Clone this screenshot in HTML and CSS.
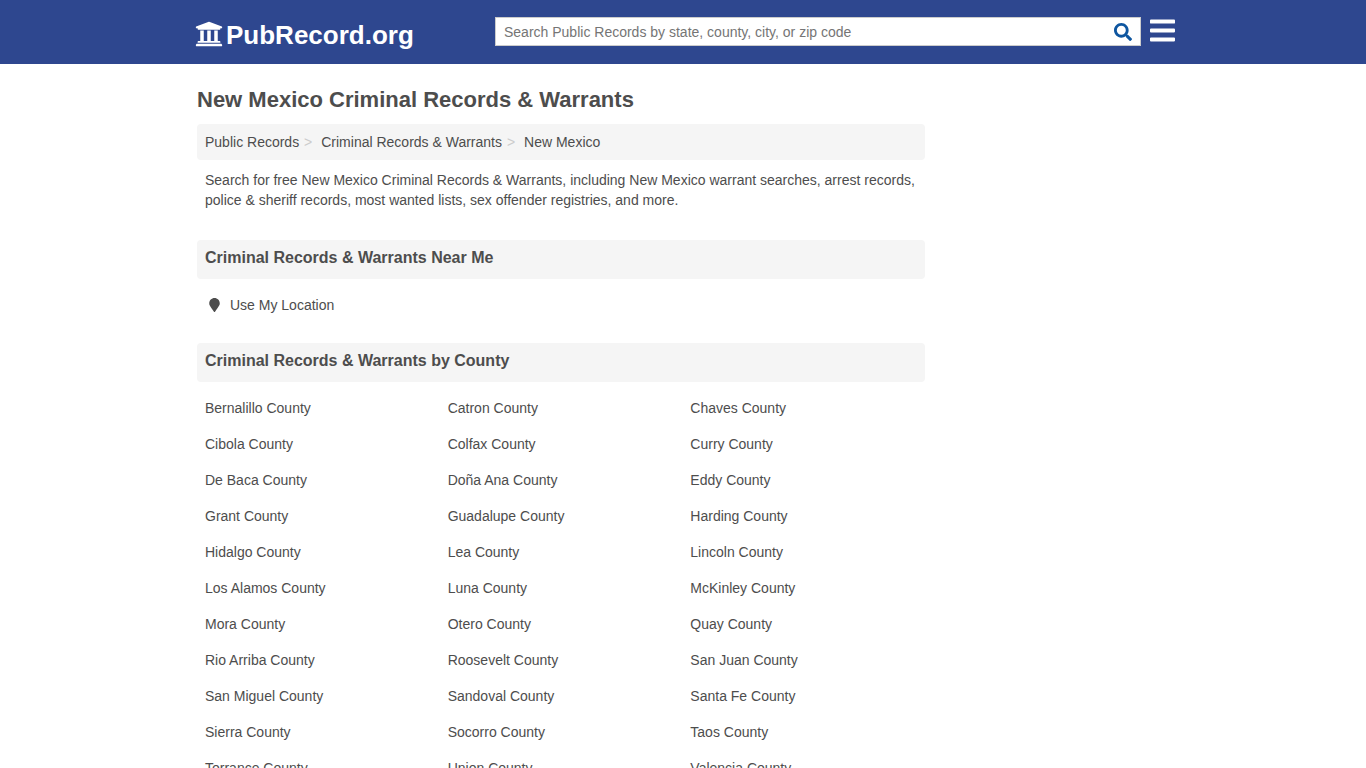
FILE: index.html
```html
<!DOCTYPE html>
<html lang="en">

<head>
    <meta charset="UTF-8">
    <title>New Mexico Criminal Records &amp; Warrants</title>
    <link rel="stylesheet" href="styles.css">
</head>

<body>
    <header class="header">
        <div class="header-inner">
            <a class="logo" href="#">
                <svg class="logo-icon" viewBox="0 0 512 512"><path d="M496 128v16a8 8 0 0 1-8 8h-24v12c0 6.627-5.373 12-12 12H60c-6.627 0-12-5.373-12-12v-12H24a8 8 0 0 1-8-8v-16a8 8 0 0 1 4.941-7.392l232-88a7.996 7.996 0 0 1 6.118 0l232 88A8 8 0 0 1 496 128zm-24 304H40c-13.255 0-24 10.745-24 24v16a8 8 0 0 0 8 8h464a8 8 0 0 0 8-8v-16c0-13.255-10.745-24-24-24zM96 192v192H60c-6.627 0-12 5.373-12 12v20h416v-20c0-6.627-5.373-12-12-12h-36V192h-64v192h-64V192h-64v192h-64V192H96z"/></svg>
                <span>PubRecord.org</span>
            </a>
            <form class="search">
                <input class="search-input" type="text" placeholder="Search Public Records by state, county, city, or zip code">
                <button class="search-button" type="button" aria-label="Search">
                    <svg class="search-icon" viewBox="0 0 512 512"><path d="M505 442.700L405.300 343c-4.500-4.500-10.600-7-17-7H372c27.600-35.300 44-79.700 44-128C416 93.100 322.900 0 208 0S0 93.100 0 208s93.100 208 208 208c48.300 0 92.700-16.400 128-44v16.300c0 6.400 2.500 12.500 7 17l99.700 99.700c9.400 9.400 24.600 9.400 33.900 0l28.300-28.300c9.400-9.400 9.400-24.600.1-34zM208 336c-70.700 0-128-57.200-128-128 0-70.700 57.200-128 128-128 70.700 0 128 57.200 128 128 0 70.700-57.200 128-128 128z"/></svg>
                </button>
            </form>
            <button class="menu-button" type="button" aria-label="Menu">
                <svg class="menu-icon" viewBox="0 0 448 512"><path d="M16 132h416c8.837 0 16-7.163 16-16V76c0-8.837-7.163-16-16-16H16C7.163 60 0 67.163 0 76v40c0 8.837 7.163 16 16 16zm0 160h416c8.837 0 16-7.163 16-16v-40c0-8.837-7.163-16-16-16H16c-8.837 0-16 7.163-16 16v40c0 8.837 7.163 16 16 16zm0 160h416c8.837 0 16-7.163 16-16v-40c0-8.837-7.163-16-16-16H16c-8.837 0-16 7.163-16 16v40c0 8.837 7.163 16 16 16z"/></svg>
            </button>
        </div>
    </header>
    <main class="container">
        <h1>New Mexico Criminal Records &amp; Warrants</h1>
        <nav class="breadcrumb">
            <a href="#">Public Records</a>
            <a href="#">Criminal Records &amp; Warrants</a>
            <a href="#">New Mexico</a>
        </nav>
        <p class="intro">Search for free New Mexico Criminal Records &amp; Warrants, including New Mexico warrant searches, arrest records, police &amp; sheriff records, most wanted lists, sex offender registries, and more.</p>

        <h2>Criminal Records &amp; Warrants Near Me</h2>
        <a class="location" href="#">
            <svg class="location-icon" viewBox="0 0 384 512"><path d="M172.268 501.670C26.970 291.031 0 269.413 0 192 0 85.961 85.961 0 192 0s192 85.961 192 192c0 77.413-26.970 99.031-172.268 309.670-9.535 13.774-29.930 13.773-39.464 0z"/></svg>
            <span>Use My Location</span>
        </a>

        <h2>Criminal Records &amp; Warrants by County</h2>
        <ul class="counties">
            <li><a href="#">Bernalillo County</a></li>
            <li><a href="#">Catron County</a></li>
            <li><a href="#">Chaves County</a></li>
            <li><a href="#">Cibola County</a></li>
            <li><a href="#">Colfax County</a></li>
            <li><a href="#">Curry County</a></li>
            <li><a href="#">De Baca County</a></li>
            <li><a href="#">Doña Ana County</a></li>
            <li><a href="#">Eddy County</a></li>
            <li><a href="#">Grant County</a></li>
            <li><a href="#">Guadalupe County</a></li>
            <li><a href="#">Harding County</a></li>
            <li><a href="#">Hidalgo County</a></li>
            <li><a href="#">Lea County</a></li>
            <li><a href="#">Lincoln County</a></li>
            <li><a href="#">Los Alamos County</a></li>
            <li><a href="#">Luna County</a></li>
            <li><a href="#">McKinley County</a></li>
            <li><a href="#">Mora County</a></li>
            <li><a href="#">Otero County</a></li>
            <li><a href="#">Quay County</a></li>
            <li><a href="#">Rio Arriba County</a></li>
            <li><a href="#">Roosevelt County</a></li>
            <li><a href="#">San Juan County</a></li>
            <li><a href="#">San Miguel County</a></li>
            <li><a href="#">Sandoval County</a></li>
            <li><a href="#">Santa Fe County</a></li>
            <li><a href="#">Sierra County</a></li>
            <li><a href="#">Socorro County</a></li>
            <li><a href="#">Taos County</a></li>
            <li><a href="#">Torrance County</a></li>
            <li><a href="#">Union County</a></li>
            <li><a href="#">Valencia County</a></li>
        </ul>
    </main>
</body>

</html>
```

FILE: styles.css
```css
* {
    box-sizing: border-box;
}

html {
    height: 100%;
    overflow: hidden;
}

body {
    margin: 0;
    height: 100%;
    overflow: hidden;
    background-color: #fff;
    color: #4d4d4d;
    font: 14px/20px "Liberation Sans", Arial, sans-serif;
}

a {
    color: inherit;
    text-decoration: none;
}

svg {
    display: block;
    fill: currentColor;
}

button {
    border: 0;
    padding: 0;
    background: none;
}

/* Header */

.header {
    height: 64px;
    background-color: #2e478f;
}

.header-inner {
    display: flex;
    align-items: flex-start;
    width: 980px;
    margin-left: 195px;
}

.logo {
    display: flex;
    width: 300px;
    padding-top: 20px;
    color: #fff;
    font-size: 26px;
    font-weight: bold;
    line-height: 30px;
}

.logo-icon {
    width: 28px;
    height: 28px;
    margin-right: 3px;
}

.search {
    display: flex;
    width: 646px;
    height: 29px;
    margin-top: 17px;
    border: 1px solid #ccc;
    background-color: #fff;
}

.search-input {
    flex: 1;
    border: 0;
    padding: 0 8px;
    background: none;
    font: inherit;
}

.search-input::placeholder {
    color: #757575;
}

.search-button {
    width: 34px;
    padding-left: 8px;
    color: #0e56a0;
}

.search-icon {
    width: 18px;
    height: 18px;
}

.menu-button {
    margin: 16px 0 0 9px;
    color: #fff;
}

.menu-icon {
    width: 25px;
    height: 29px;
}

/* Content */

.container {
    width: 728px;
    margin-left: 197px;
}

h1 {
    margin: 0;
    padding: 24px 0 12px;
    font-size: 22px;
    line-height: 24px;
}

.breadcrumb {
    height: 36px;
    padding: 8px;
    border-radius: 4px;
    background-color: #f5f5f5;
}

.breadcrumb a + a::before {
    content: ">";
    padding: 0 9px 0 1px;
    color: #ccc;
}

.intro {
    margin: 0 0 30px;
    padding: 10px 8px 0;
}

h2 {
    margin: 0;
    padding: 8px 8px 11px;
    border-radius: 4px;
    background-color: #f5f5f5;
    font-size: 16px;
    line-height: 20px;
}

.location {
    display: flex;
    align-items: center;
    height: 20px;
    margin: 16px 0 28px;
    padding-left: 12px;
}

.location-icon {
    width: 11px;
    height: 14px;
    margin-right: 10px;
}

.counties {
    display: grid;
    grid-template-columns: repeat(3, 1fr);
    margin: 8px 0 0;
    padding: 0;
    list-style: none;
}

.counties li {
    padding: 8px;
}
```
